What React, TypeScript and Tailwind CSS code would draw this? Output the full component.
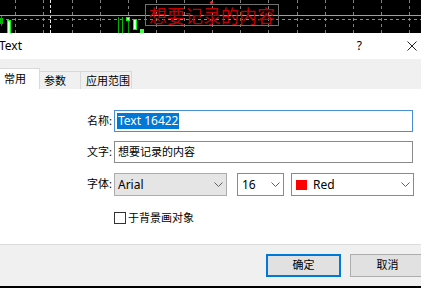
import React from 'react'

const gridX = [15, 43, 72, 100, 128, 156, 184, 212, 240, 268, 297, 325, 353, 381, 409]

const Chevron = () => (
    <svg width="9" height="6" viewBox="0 0 9 6" className="shrink-0">
        <path d="M0.5 0.5 L4.5 4.5 L8.5 0.5" fill="none" stroke="#606060" strokeWidth="1"/>
    </svg>
)

const Chart = () => {
    return (
        <div className="relative h-[33px] bg-black overflow-hidden">
            <svg className="absolute inset-0" width="421" height="33">
                {gridX.map((x) => (
                    <line key={x} x1={x + 0.5} y1={0} x2={x + 0.5} y2={33} stroke="#808080" strokeDasharray="3 3"/>
                ))}
                <line x1="50.5" y1="0" x2="50.5" y2="33" stroke="#e8e8e8" strokeDasharray="3 2"/>
                <line x1="0" y1="15.5" x2="421" y2="15.5" stroke="#9c9cab"/>
                <line x1="0" y1="19.5" x2="421" y2="19.5" stroke="#8c8c8c" strokeDasharray="3 3"/>
                {/* candles */}
                <rect x="0" y="18" width="3" height="6" fill="#00c000"/>
                <line x1="1.5" y1="16" x2="1.5" y2="26" stroke="#00a000"/>
                <rect x="7.5" y="20.5" width="3" height="13" fill="#d8ffd8" stroke="#00ff00"/>
                <line x1="118.5" y1="17" x2="118.5" y2="33" stroke="#00b000"/>
                <line x1="122.5" y1="17" x2="122.5" y2="33" stroke="#00c000"/>
                <line x1="128.5" y1="17" x2="128.5" y2="33" stroke="#00a000"/>
                <rect x="126.5" y="17.5" width="3" height="3" fill="#d8ffd8" stroke="#00ff00"/>
                <rect x="133.5" y="19.5" width="3" height="10" fill="#e0ffe0" stroke="#00ff00"/>
                <rect x="140" y="29" width="4" height="4" fill="#40ff40"/>
                <circle cx="211.5" cy="2.5" r="1.5" fill="#ff2020"/>
            </svg>
            <div className="absolute left-[145px] top-[4px] w-[134px] h-[22px] border border-[#727272] flex items-center justify-center whitespace-nowrap text-[18px] leading-none text-[#c00000] font-['Noto_Sans_CJK_SC',sans-serif]">
                想要记录的内容
            </div>
        </div>
    )
}

const App = () => {
    return (
        <div className="w-[421px] h-[288px] overflow-hidden bg-black font-['Noto_Sans','Noto_Sans_CJK_SC',sans-serif] text-[12px] text-black">
            <Chart/>
            {/* title bar */}
            <div className="h-[26px] bg-white flex items-center">
                <span className="ml-[-1px] text-[12px]">Text</span>
                <span className="ml-auto mr-[45px] text-[12px]">?</span>
                <svg width="10" height="10" viewBox="0 0 10 10" className="mr-[4px]">
                    <path d="M0.5 0.5 L9.5 9.5 M9.5 0.5 L0.5 9.5" stroke="#222" strokeWidth="1"/>
                </svg>
            </div>
            <div className="bg-[#f0f0f0] pt-[9px]">
                {/* tabs */}
                <div className="flex items-end h-[21px]">
                    <div className="h-[21px] w-[41px] ml-[-1px] bg-white border border-b-0 border-[#d9d9d9] pl-[4px] pt-[2px] text-[11px]">
                        常用
                    </div>
                    <div className="h-[18px] w-[41px] border border-l-0 border-b-0 border-[#d9d9d9] pl-[4px] text-[11px] leading-[18px]">
                        参数
                    </div>
                    <div className="h-[18px] w-[51px] border border-l-0 border-b-0 border-[#d9d9d9] pl-[5px] text-[11px] leading-[18px]">
                        应用范围
                    </div>
                </div>
                {/* panel */}
                <div className="h-[155px] bg-white pt-[21px] flex flex-col">
                    <div className="flex items-center h-[22px]">
                        <span className="w-[112px] text-right text-[11px]">名称:</span>
                        <div className="ml-[2px] w-[299px] h-[22px] border border-[#4a8fd3] flex items-center pl-[2px]">
                            <span className="bg-[#0078d7] text-white px-[1px] leading-[16px]">Text 16422</span>
                        </div>
                    </div>
                    <div className="flex items-center h-[22px] mt-[9px]">
                        <span className="w-[112px] text-right text-[11px]">文字:</span>
                        <div className="ml-[2px] w-[299px] h-[22px] border border-[#8a8a8a] flex items-center pl-[3px] text-[11px]">
                            想要记录的内容
                        </div>
                    </div>
                    <div className="flex items-center h-[23px] mt-[10px]">
                        <span className="w-[112px] text-right text-[11px]">字体:</span>
                        <div className="ml-[2px] w-[113px] h-[23px] bg-[#e5e5e5] border border-[#adadad] flex items-center pl-[3px] pr-[3px]">
                            <span className="flex-1">Arial</span>
                            <Chevron/>
                        </div>
                        <div className="ml-[10px] w-[47px] h-[23px] bg-white border border-[#8a8a8a] flex items-center pl-[4px] pr-[3px]">
                            <span className="flex-1">16</span>
                            <Chevron/>
                        </div>
                        <div className="ml-[7px] w-[123px] h-[23px] bg-white border border-[#8a8a8a] flex items-center pl-[4px] pr-[3px]">
                            <span className="w-[11px] h-[10px] bg-[#ff0000] mr-[6px]"></span>
                            <span className="flex-1">Red</span>
                            <Chevron/>
                        </div>
                    </div>
                    <div className="flex items-center mt-[14px] pl-[114px]">
                        <span className="w-[12px] h-[12px] border border-[#333] bg-white"></span>
                        <span className="ml-[2px] text-[11px]">于背景画对象</span>
                    </div>
                </div>
                <div className="h-px bg-[#dcdcdc]"></div>
                {/* buttons */}
                <div className="h-[41px] flex items-start pt-[9px] pl-[266px] gap-[9px]">
                    <div className="w-[75px] h-[23px] shrink-0 bg-[#e1e1e1] border-2 border-[#0078d7] flex items-center justify-center text-[11px]">
                        确定
                    </div>
                    <div className="w-[75px] h-[23px] shrink-0 bg-[#e1e1e1] border border-[#adadad] flex items-center justify-center text-[11px]">
                        取消
                    </div>
                </div>
            </div>
        </div>
    )
}

export default App
